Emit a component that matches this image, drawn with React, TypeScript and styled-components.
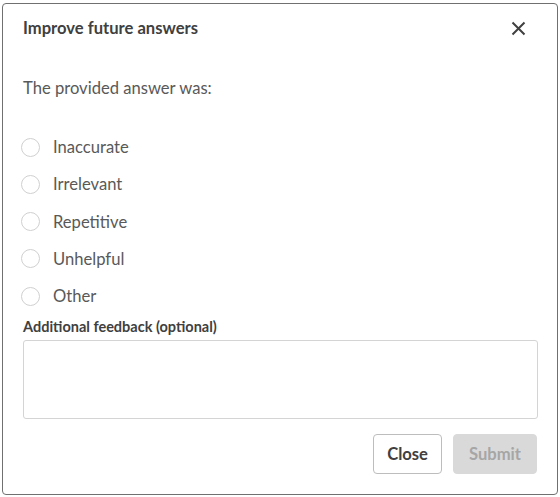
import styled, { createGlobalStyle } from 'styled-components';

const GlobalStyle = createGlobalStyle`
    html, body {
        margin: 0;
        padding: 0;
        background: #ffffff;
    }
    * {
        box-sizing: border-box;
    }
`;

const options = ['Inaccurate', 'Irrelevant', 'Repetitive', 'Unhelpful', 'Other'];

const Page = styled.div`
    width: 560px;
    height: 497px;
    padding: 3px 2px 2px 2px;
    font-family: Lato, "Noto Sans", sans-serif;
`;

const Dialog = styled.div`
    width: 556px;
    height: 492px;
    border: 1px solid #707070;
    border-radius: 4px;
    background: #fff;
    padding: 0 19px 0 20px;
    display: flex;
    flex-direction: column;
`;

const Header = styled.div`
    display: flex;
    justify-content: space-between;
    align-items: center;
    height: 48px;
`;

const Title = styled.h2`
    margin: 0;
    font-size: 16.6px;
    font-weight: 700;
    color: #404040;
`;

const CloseIcon = styled.button`
    width: 24px;
    height: 24px;
    border: none;
    background: none;
    padding: 0;
    margin-right: 8px;
    display: flex;
    align-items: center;
    justify-content: center;
    cursor: pointer;
`;

const Question = styled.p`
    margin: 26px 0 0 0;
    font-size: 16.6px;
    color: #595959;
    line-height: 20px;
`;

const OptionList = styled.div`
    display: flex;
    flex-direction: column;
    gap: 17.25px;
    margin-top: 39px;
`;

const OptionRow = styled.label`
    display: flex;
    align-items: center;
    gap: 13px;
    height: 20px;
    font-size: 16.6px;
    color: #595959;
    cursor: pointer;
`;

const Radio = styled.span`
    width: 19px;
    height: 19px;
    border-radius: 50%;
    border: 1px solid #d0d0d0;
    background: #fff;
    margin-left: -2px;
`;

const FieldLabel = styled.div`
    margin-top: 13px;
    font-size: 14.5px;
    font-weight: 700;
    color: #404040;
    line-height: 16px;
`;

const TextArea = styled.textarea`
    margin-top: 5px;
    width: 515px;
    height: 79px;
    border: 1px solid #d4d4d4;
    border-radius: 3px;
    resize: none;
    font-family: inherit;
    font-size: 14px;
    padding: 6px 8px;
    outline: none;
`;

const Footer = styled.div`
    display: flex;
    justify-content: flex-end;
    gap: 11px;
    margin-top: 15px;
    padding-right: 1px;
`;

const Button = styled.button<{ $disabled?: boolean }>`
    height: 40px;
    padding: 0 ${p => (p.$disabled ? '15px' : '13px')};
    border-radius: 4px;
    font-family: inherit;
    font-size: 16.6px;
    font-weight: 700;
    border: 1px solid ${p => (p.$disabled ? '#d9d9d9' : '#bdbdbd')};
    background: ${p => (p.$disabled ? '#d9d9d9' : '#fff')};
    color: ${p => (p.$disabled ? '#a6a6a6' : '#404040')};
    cursor: ${p => (p.$disabled ? 'default' : 'pointer')};
`;

export default function App() {
    return (
        <>
            <GlobalStyle />
            <Page>
                <Dialog>
                    <Header>
                        <Title>Improve future answers</Title>
                        <CloseIcon aria-label="Close">
                            <svg width="15" height="15" viewBox="0 0 15 15">
                                <path d="M1.5 1.5 L13.5 13.5 M13.5 1.5 L1.5 13.5" stroke="#404040" strokeWidth="2" />
                            </svg>
                        </CloseIcon>
                    </Header>
                    <Question>The provided answer was:</Question>
                    <OptionList>
                        {options.map(o => (
                            <OptionRow key={o}>
                                <Radio />
                                {o}
                            </OptionRow>
                        ))}
                    </OptionList>
                    <FieldLabel>Additional feedback (optional)</FieldLabel>
                    <TextArea />
                    <Footer>
                        <Button>Close</Button>
                        <Button $disabled>Submit</Button>
                    </Footer>
                </Dialog>
            </Page>
        </>
    );
}
